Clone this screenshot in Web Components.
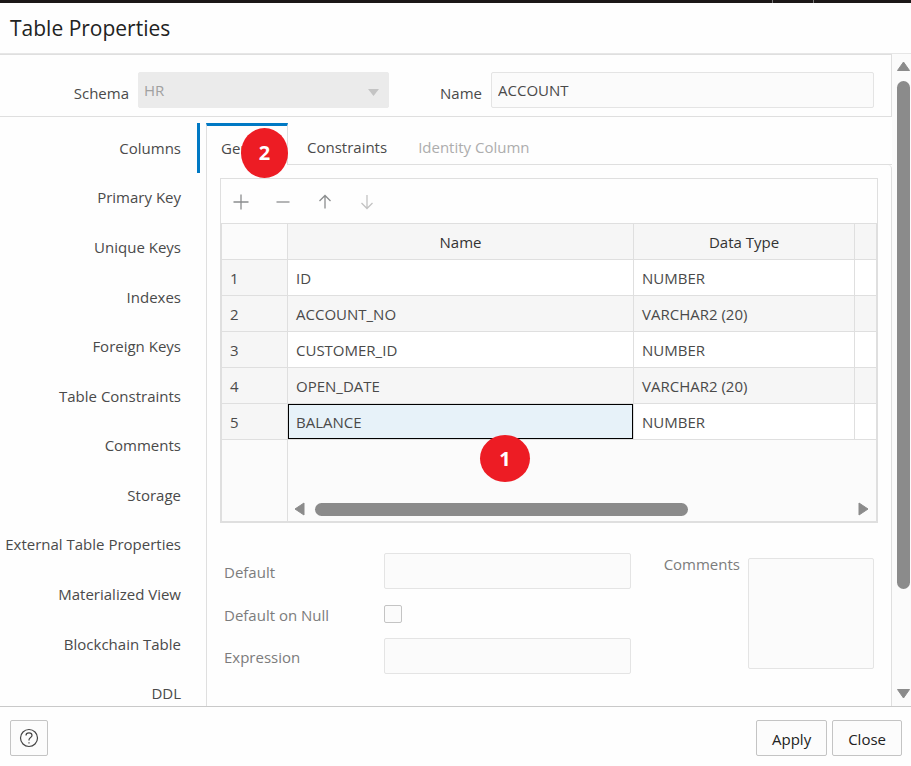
<!DOCTYPE html>
<html lang="en">
<head>
<meta charset="utf-8">
<title>Table Properties</title>
<style>
  html, body { height: 100%; }
  body {
    margin: 0;
    background: #fefefe;
    color: #4a4a4a;
    font: 15px/20px "Open Sans", "Noto Sans", sans-serif;
    --line: #dfdfdf;
    --accent: #0079c4;
    --fill: #fbfbfb;
    --muted: #7c7c7c;
  }
</style>
</head>
<body>
<properties-dialog heading="Table Properties">
  <text-field slot="top" kind="select" label="Schema" value="HR"></text-field>
  <text-field slot="top" kind="text" label="Name" value="ACCOUNT"></text-field>
  <side-nav slot="nav"></side-nav>
  <tab-panel slot="content">
    <callout-badge slot="badge" class="tall">2</callout-badge>
    <column-grid><callout-badge>1</callout-badge></column-grid>
    <column-form></column-form>
  </tab-panel>
</properties-dialog>

<script>
const base = `*, *::before, *::after { box-sizing: border-box; }
  button, input, select, textarea { font: inherit; color: inherit; margin: 0; border-radius: 2px; }
  button { background: none; border: 0; padding: 0; }
  svg { display: block; }`;

function define(name, markup) {
  customElements.define(name, class extends HTMLElement {
    constructor() {
      super();
      this.attachShadow({ mode: "open" });
    }
    connectedCallback() {
      const text = typeof markup === "function" ? markup(this) : markup;
      const template = document.createElement("template");
      template.innerHTML = `<style>${base}</style>${text}`;
      this.shadowRoot.replaceChildren(template.content.cloneNode(true));
    }
  });
}

define("callout-badge", `
  <style>
    :host { position: absolute; display: grid; place-items: center; width: 50px; height: 47px;
      border-radius: 50%; background: #ed1c24; color: #fff; font-size: 20px; line-height: 26px; font-weight: 700; }
    :host(.tall) { width: 47px; height: 50px; }
  </style><span><slot></slot></span>`);

define("text-field", el => `
  <style>
    :host { display: grid; align-items: start; grid-template-columns: 129px 1fr; column-gap: 9px; }
    :host([kind="text"]) { grid-template-columns: 93px 1fr; }
    label { text-align: right; padding-top: 11px; }
    .box { position: relative; }
    input, select { display: block; width: 100%; height: 36px; padding: 0 6px; border: 1px solid #e4e4e4; background: var(--fill); }
    select { appearance: none; padding: 0 5px; border-color: #ebebeb; background: #ebebeb; color: #a0a0a0; opacity: 1; }
    svg { position: absolute; right: 10px; top: 17px; }
  </style>
  <label for="c">${el.getAttribute("label")}</label>
  <div class="box">${el.getAttribute("kind") === "select"
    ? `<select id="c" disabled><option>${el.getAttribute("value")}</option></select>
       <svg width="11" height="7"><path d="M0 0H11L5.5 7Z" fill="#c4c4c4"/></svg>`
    : `<input id="c" type="text" value="${el.getAttribute("value")}">`}</div>`);

define("side-nav", `
  <style>
    :host { display: flex; flex-direction: column; }
    button { flex: 1; padding-right: 16px; text-align: right; border-right: 3px solid transparent; border-radius: 0; white-space: nowrap; }
    button[aria-current] { border-right-color: var(--accent); }
  </style>
  ${["Columns", "Primary Key", "Unique Keys", "Indexes", "Foreign Keys", "Table Constraints", "Comments", "Storage",
     "External Table Properties", "Materialized View", "Blockchain Table", "DDL"]
    .map((t, i) => `<button type="button"${i ? "" : ' aria-current="page"'}>${t}</button>`).join("")}`);

define("tab-panel", `
  <style>
    :host { display: flex; flex-direction: column; }
    .tabs { display: flex; height: 42px; }
    .tab { position: relative; display: flex; }
    .active { width: 82px; border: solid var(--line); border-width: 0 1px; border-top: 3px solid var(--accent); }
    .active button { padding: 4px 0 0 14px; }
    .rest { flex: 1; display: flex; gap: 31px; border-bottom: 1px solid var(--line); padding: 7px 0 0 19px; }
    .rest button:disabled { color: #adadad; }
    .body { flex: 1; border: solid var(--line); border-width: 0 1px; border-top-right-radius: 4px; padding: 13px; }
    ::slotted([slot="badge"]) { left: 34px; top: 2px; z-index: 1; }
  </style>
  <div class="tabs" role="tablist">
    <div class="tab active"><button type="button" role="tab" aria-selected="true">General</button><slot name="badge"></slot></div>
    <div class="rest">
      <button type="button" role="tab">Constraints</button>
      <button type="button" role="tab" disabled>Identity Column</button>
    </div>
  </div>
  <div class="body"><slot></slot></div>`);

const icon = (d, dim) => `<svg width="16" height="16" viewBox="0 0 16 16" fill="none" stroke="${dim ? "#c3c3c3" : "#8b8d8e"}" stroke-width="1.3"><path d="${d}"/></svg>`;
const rows = [["ID", "NUMBER"], ["ACCOUNT_NO", "VARCHAR2 (20)"], ["CUSTOMER_ID", "NUMBER"], ["OPEN_DATE", "VARCHAR2 (20)"], ["BALANCE", "NUMBER"]];

define("column-grid", `
  <style>
    :host { display: block; position: relative; border: 1px solid var(--line); }
    .tools { display: flex; gap: 2px; height: 44px; padding-top: 2px; }
    .tools button { width: 40px; display: grid; place-items: center; }
    .frame { border: 1px solid var(--line); background: var(--fill); }
    table { width: 100%; table-layout: fixed; border-collapse: separate; border-spacing: 0; }
    th, td { height: 36px; padding: 0 8px; border: solid var(--line); border-width: 0 1px 1px 0; text-align: left; font-weight: 400; background: #fff; white-space: nowrap; }
    thead th { text-align: center; color: #333; }
    thead th, thead td { background: #f6f6f6; }
    thead td:first-child { background: var(--fill); }
    th:last-child, td:last-child { border-right: 0; }
    tbody th, tbody tr:nth-child(even) td { background: #f6f6f6; }
    tbody td.picked { background: #e7f2f9; box-shadow: inset 0 0 0 1px #000; }
    .n { width: 66px; } .t { width: 221px; } .x { width: 21px; }
    .foot { display: flex; height: 81px; align-items: flex-end; }
    .gutter { width: 66px; align-self: stretch; border-right: 1px solid var(--line); }
    .bar { flex: 1; display: flex; align-items: center; gap: 10px; padding: 0 7px 5px 6px; }
    .track { flex: 1; }
    .thumb { width: 70%; height: 13px; border-radius: 7px; background: #8b8b8b; }
    ::slotted(callout-badge) { left: 259px; top: 256px; }
  </style>
  <div class="tools">
    <button type="button" aria-label="Add">${icon("M8 .5V15.5M.5 8H15.5")}</button>
    <button type="button" aria-label="Remove">${icon("M1.5 8H14.5")}</button>
    <button type="button" aria-label="Move up">${icon("M8 14.5V1.5M2.5 7L8 1.5L13.5 7")}</button>
    <button type="button" aria-label="Move down" disabled>${icon("M8 1V14.5M2.5 9L8 14.5L13.5 9", true)}</button>
  </div>
  <div class="frame">
    <table>
      <colgroup><col class="n"><col><col class="t"><col class="x"></colgroup>
      <thead><tr><td></td><th scope="col">Name</th><th scope="col">Data Type</th><td></td></tr></thead>
      <tbody>${rows.map((r, i) => `<tr><th scope="row">${i + 1}</th><td${i === 4 ? ' class="picked"' : ""}>${r[0]}</td><td>${r[1]}</td><td></td></tr>`).join("")}</tbody>
    </table>
    <div class="foot">
      <div class="gutter"></div>
      <div class="bar">
        <svg width="11" height="14"><path d="M10 1V13L1 7Z" fill="#8b8b8b" stroke="#8b8b8b" stroke-linejoin="round"/></svg>
        <div class="track"><div class="thumb"></div></div>
        <svg width="11" height="14"><path d="M1 1V13L10 7Z" fill="#8b8b8b" stroke="#8b8b8b" stroke-linejoin="round"/></svg>
      </div>
    </div>
  </div>
  <slot></slot>`);

define("column-form", `
  <style>
    :host { display: flex; justify-content: space-between; padding: 30px 4px 0; color: var(--muted); }
    .left { display: grid; grid-template-columns: 160px minmax(0, 247px); grid-template-rows: 36px 49px 36px; align-items: center; }
    .left label { padding-top: 2px; }
    input[type="text"], textarea { display: block; width: 100%; height: 36px; border: 1px solid #e4e4e4; background: var(--fill); resize: none; }
    input[type="checkbox"] { appearance: none; width: 18px; height: 18px; border: 1px solid #c4c4c4; background: var(--fill); }
    .right { display: flex; gap: 8px; }
    .right label { padding-top: 1px; }
    textarea { width: 126px; height: 111px; margin-top: 5px; }
  </style>
  <div class="left">
    <label for="d">Default</label><input id="d" type="text">
    <label for="n">Default on Null</label><input id="n" type="checkbox">
    <label for="e">Expression</label><input id="e" type="text">
  </div>
  <div class="right"><label for="m">Comments</label><textarea id="m"></textarea></div>`);

define("scroll-rail", `
  <style>
    :host { display: flex; flex-direction: column; align-items: flex-end; width: 19px; padding: 7px 0; background: var(--fill); gap: 10px; }
    .track { flex: 1; width: 14px; }
    .thumb { width: 13px; height: 85%; border-radius: 7px; background: #8b8b8b; }
  </style>
  <svg width="15" height="10"><path d="M1.5 9.5H13.5L7.5 1Z" fill="#8b8b8b" stroke="#8b8b8b" stroke-linejoin="round"/></svg>
  <div class="track"><div class="thumb"></div></div>
  <svg width="15" height="10"><path d="M1.5 .5H13.5L7.5 9Z" fill="#8b8b8b" stroke="#8b8b8b" stroke-linejoin="round"/></svg>`);

define("properties-dialog", el => `
  <style>
    :host { display: flex; flex-direction: column; min-height: 100vh; }
    .strip { height: 3px; background: #1c1818; display: flex; justify-content: flex-end; gap: 40px; padding-right: 97px; }
    .strip i { width: 1px; background: #777; }
    header { height: 51px; border-bottom: 1px solid #e6e6e6; padding: 0 10px; display: flex; align-items: center; }
    h1 { margin: 0; font-size: 21px; line-height: 28px; font-weight: 500; color: #222; }
    main { flex: 1; display: grid; grid-template-columns: minmax(0, 1fr) 19px; overflow: hidden; }
    .pane { display: flex; flex-direction: column; }
    .top { display: grid; grid-template-columns: 389px 1fr; padding: 17px 17px 8px 0; border: solid var(--line); border-width: 1px 1px 1px 0; }
    .work { flex: 1; display: grid; grid-template-columns: 200px minmax(0, 1fr); column-gap: 6px; padding-top: 6px; }
    ::slotted(side-nav) { margin-bottom: -12px; }
    footer { display: flex; gap: 5px; align-items: center; border-top: 1px solid #c9c9c9; padding: 13px 9px 10px 10px; background: #fefefe; z-index: 1; }
    footer button { height: 36px; border: 1px solid #c4c4c4; background: #fcfcfc; color: #222; padding: 2px 15px 0; }
    footer .help { width: 38px; padding: 0; display: grid; place-items: center; margin-right: auto; }
  </style>
  <div class="strip"><i></i><i></i></div>
  <header><h1>${el.getAttribute("heading")}</h1></header>
  <main>
    <div class="pane">
      <div class="top"><slot name="top"></slot></div>
      <div class="work"><slot name="nav"></slot><slot name="content"></slot></div>
    </div>
    <scroll-rail></scroll-rail>
  </main>
  <footer>
    <button type="button" class="help" aria-label="Help">
      <svg width="20" height="20" viewBox="0 0 20 20" fill="none" stroke="#444" stroke-width="1.2"><circle cx="10" cy="10" r="8.5"/><path d="M7 7.6C7 5.8 8.3 4.9 10 4.9S13 5.9 13 7.4C13 9.4 10 9.6 10 11.8V12.6M10 14.2V15.4"/></svg>
    </button>
    <button type="button">Apply</button>
    <button type="button">Close</button>
  </footer>`);
</script>
</body>
</html>
